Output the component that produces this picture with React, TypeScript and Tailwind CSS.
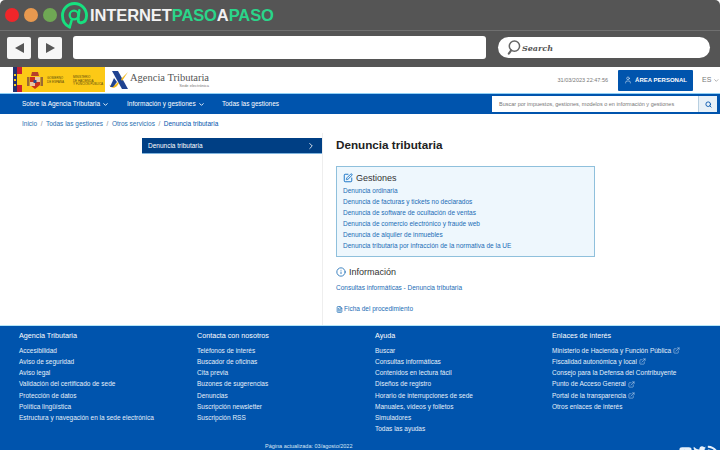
import { ChevronDown, ChevronRight, ExternalLink, FileText, Info, Search, SquarePen, User } from "lucide-react";
import { FaRss, FaTwitter, FaYoutube } from "react-icons/fa";

const gestiones = [
  "Denuncia ordinaria",
  "Denuncia de facturas y tickets no declarados",
  "Denuncia de software de ocultación de ventas",
  "Denuncia de comercio electrónico y fraude web",
  "Denuncia de alquiler de inmuebles",
  "Denuncia tributaria por infracción de la normativa de la UE",
];

const footerColumns = [
  {
    title: "Agencia Tributaria",
    width: "w-[178px]",
    links: [
      { label: "Accesibilidad" },
      { label: "Aviso de seguridad" },
      { label: "Aviso legal" },
      { label: "Validación del certificado de sede" },
      { label: "Protección de datos" },
      { label: "Política lingüística" },
      { label: "Estructura y navegación en la sede electrónica" },
    ],
  },
  {
    title: "Contacta con nosotros",
    width: "w-[178px]",
    links: [
      { label: "Teléfonos de interés" },
      { label: "Buscador de oficinas" },
      { label: "Cita previa" },
      { label: "Buzones de sugerencias" },
      { label: "Denuncias" },
      { label: "Suscripción newsletter" },
      { label: "Suscripción RSS" },
    ],
  },
  {
    title: "Ayuda",
    width: "w-[177px]",
    links: [
      { label: "Buscar" },
      { label: "Consultas informáticas" },
      { label: "Contenidos en lectura fácil" },
      { label: "Diseños de registro" },
      { label: "Horario de interrupciones de sede" },
      { label: "Manuales, vídeos y folletos" },
      { label: "Simuladores" },
      { label: "Todas las ayudas" },
    ],
  },
  {
    title: "Enlaces de interés",
    width: "w-[168px]",
    links: [
      { label: "Ministerio de Hacienda y Función Pública", external: true },
      { label: "Fiscalidad autonómica y local", external: true },
      { label: "Consejo para la Defensa del Contribuyente" },
      { label: "Punto de Acceso General", external: true },
      { label: "Portal de la transparencia", external: true },
      { label: "Otros enlaces de interés" },
    ],
  },
];

function BrowserChrome() {
  return (
    <div className="h-[67px] shrink-0 rounded-t-[5px] bg-[#555555] font-['Liberation_Sans',sans-serif]">
      <div className="flex h-[31px] items-center border-b border-[#6f6f6f] pl-[5px]">
        <span className="h-[14px] w-[14px] rounded-full bg-[#f0262a]" />
        <span className="ml-[5px] h-[14px] w-[14px] rounded-full bg-[#e8994f]" />
        <span className="ml-[5px] h-[14px] w-[14px] rounded-full bg-[#6fa854]" />
        <svg viewBox="0 0 28 28" className="ml-[4px] h-[27px] w-[27px]" fill="none" stroke="#17e07f" strokeLinecap="round">
          <path d="M9 26C3 23.500 1.500 18 1.500 14A12.500 12.500 0 0 1 26.500 14C26.500 18 24.500 21 21 21.500C18.500 21.800 17.500 20 18 18" strokeWidth="3" />
          <circle cx="13.500" cy="13.500" r="4.500" strokeWidth="2.400" />
          <path d="M19 8.500 17.800 18M11 19 9 26" strokeWidth="2.600" />
        </svg>
        <span className="ml-[2px] text-[16.5px] font-bold leading-none tracking-[-0.1px] text-[#f2f2f2]">
          INTERNET
          <span className="text-[#2ad58a]">PASO</span>A<span className="text-[#2ad58a]">PASO</span>
        </span>
      </div>
      <div className="flex items-center pl-[7px] pt-[5px]">
        <div className="flex h-[22px] w-[24px] items-center justify-center rounded-[2px] bg-[#f6f6f6]">
          <span className="h-0 w-0 border-y-[5px] border-r-[9px] border-y-transparent border-r-[#555555]" />
        </div>
        <div className="ml-[7px] flex h-[22px] w-[24px] items-center justify-center rounded-[2px] bg-[#f6f6f6]">
          <span className="h-0 w-0 border-y-[5px] border-l-[9px] border-y-transparent border-l-[#555555]" />
        </div>
        <div className="ml-[11px] h-[23px] w-[413px] rounded-[3px] bg-white" />
        <div className="ml-[12px] flex h-[21px] w-[212px] items-center rounded-full bg-white pl-[8px]">
          <svg viewBox="0 0 16 16" className="h-[15px] w-[15px]" fill="none" stroke="#666666" strokeWidth="1.600">
            <circle cx="9" cy="6.500" r="5.500" />
            <path d="M5.500 11 3 14.500" strokeWidth="2.200" strokeLinecap="round" />
          </svg>
          <span className="ml-[1px] font-['DejaVu_Serif',serif] text-[8px] font-bold italic text-[#555555]">Search</span>
        </div>
      </div>
    </div>
  );
}

function SiteHeader() {
  return (
    <div className="flex h-[26px] shrink-0 items-center bg-white pl-[13px]">
      <div className="flex h-[25px] w-[92px] self-start bg-[#fcc916]">
        <div className="flex w-[4px] flex-col items-center justify-center gap-[3px] bg-[#23306f]">
          <span className="h-[2px] w-[2px] bg-[#fcc916]" />
          <span className="h-[2px] w-[2px] bg-[#fcc916]" />
          <span className="h-[2px] w-[2px] bg-[#fcc916]" />
        </div>
        <div className="flex w-[5px] flex-col justify-between">
          <span className="h-[7px] bg-[#c8202f]" />
          <span className="h-[7px] bg-[#c8202f]" />
        </div>
        <svg viewBox="0 0 16 19" className="ml-[5px] mt-[4px] h-[19px] w-[16px]">
          <path d="M3 6h10v8l-5 4-5-4z" fill="#c8321f" />
          <path d="M5 1h6l1 4H4z" fill="#b5402a" />
          <path d="M0 6h2.500v9H0zM13.500 6H16v9h-2.500z" fill="#9a6a34" />
          <path d="M8 6h5v5H8zM3 11h5v4H3z" fill="#e9c6a6" />
          <path d="M6.500 9h3v3h-3z" fill="#2c4a90" />
        </svg>
        <div className="ml-[4px] mt-[9px] text-[3px] leading-[4px] text-[#5a4a10]">
          GOBIERNO
          <br />
          DE ESPAÑA
        </div>
        <div className="ml-[9px] mt-[9px] text-[3px] leading-[3.5px] text-[#5a4a10]">
          MINISTERIO
          <br />
          DE HACIENDA
          <br />
          Y FUNCIÓN PÚBLICA
        </div>
      </div>
      <svg viewBox="0 0 20 20" className="ml-[4px] h-[20px] w-[20px]">
        <path d="M0 14c1 2 4 2 7 0l2-2 1 1-2 3c-3 3-7 2-8-2z" fill="#f2b91e" />
        <path d="M3 1h6l10 18h-6z" fill="#1f4391" />
        <path d="M5 8 8 12 4 17H1z" fill="#1f4391" />
        <path d="M19 2 13 11l-1-2z" fill="#f2b91e" />
      </svg>
      <div className="ml-[1px] -mt-[1px] flex flex-col font-['Liberation_Serif',serif]">
        <span className="text-[10.5px] leading-[11px] text-[#555555]">Agencia Tributaria</span>
        <span className="self-end font-['Liberation_Sans',sans-serif] text-[4px] leading-[5px] text-[#777777]">Sede electrónica</span>
      </div>
      <span className="ml-auto text-[5.5px] text-[#777777]">31/03/2023 22:47:56</span>
      <div className="ml-[10px] flex h-[21px] w-[75px] items-center justify-center gap-[3px] rounded-[1px] bg-[#0054ad] text-[6px] font-bold text-white">
        <User size={8} strokeWidth={1.5} />
        ÁREA PERSONAL
      </div>
      <span className="ml-[9px] flex w-[18px] items-center gap-[2px] text-[7px] text-[#777777]">
        ES
        <ChevronDown size={7} />
      </span>
    </div>
  );
}

function SiteNav() {
  return (
    <div className="flex h-[21px] shrink-0 items-center border-t border-[#8fd0f5] bg-[#0054ad] pl-[22px] text-[6.5px] text-white">
      <span className="flex w-[105px] items-center gap-[2px]">
        Sobre la Agencia Tributaria
        <ChevronDown size={7} strokeWidth={3} />
      </span>
      <span className="flex w-[95px] items-center gap-[2px]">
        Información y gestiones
        <ChevronDown size={7} strokeWidth={3} />
      </span>
      <span>Todas las gestiones</span>
      <div className="ml-auto mr-[3px] flex h-[16px] w-[225px] bg-white">
        <span className="flex flex-1 items-center pl-[7px] text-[5.5px] text-[#777777]">
          Buscar por impuestos, gestiones, modelos o en información y gestiones
        </span>
        <span className="flex w-[19px] items-center justify-center border-l border-[#b8cfe0] bg-[#e8f1f8]">
          <Search size={7} strokeWidth={3} className="text-[#0054ad]" />
        </span>
      </div>
    </div>
  );
}

function Breadcrumb() {
  const items = ["Inicio", "Todas las gestiones", "Otros servicios", "Denuncia tributaria"];
  return (
    <div className="flex h-[19px] shrink-0 items-center gap-[3.5px] pl-[22px] text-[6.5px] text-[#2a6fb0]">
      {items.map((item, i) => (
        <span key={item} className="flex items-center gap-[3.5px]">
          {i > 0 && <span className="text-[#888888]">/</span>}
          <span className={i === 3 ? "text-[#0054ad]" : ""}>{item}</span>
        </span>
      ))}
    </div>
  );
}

function MainContent() {
  return (
    <div className="flex h-[192px] shrink-0 pl-[142px]">
      <div className="w-[181px] border-r border-[#eeeeee] pt-[5px]">
        <div className="flex h-[16px] w-[180px] items-center justify-between border-b border-[#7fb4de] bg-[#003f84] pl-[6px] pr-[6px] text-[6.5px] text-white">
          Denuncia tributaria
          <ChevronRight size={10} />
        </div>
      </div>
      <div className="box-content w-[259px] pl-[13px]">
        <h1 className="mt-[4px] text-[11.7px] font-bold leading-[16px] text-[#222222]">Denuncia tributaria</h1>
        <div className="mt-[13px] h-[91px] w-[259px] border border-[#8fc0dc] bg-[#eef7fd] pl-[6px] pt-[5px]">
          <div className="flex items-center gap-[3px] text-[9px] leading-[12px] text-[#333333]">
            <SquarePen size={10} strokeWidth={2.4} className="text-[#1f78c8]" />
            Gestiones
          </div>
          <div className="mt-[1px] flex flex-col">
            {gestiones.map((g) => (
              <span key={g} className="text-[6.5px] leading-[11.1px] text-[#1a6cb5]">
                {g}
              </span>
            ))}
          </div>
        </div>
        <div className="mt-[8px] flex items-center gap-[3px] text-[9px] leading-[14px] text-[#333333]">
          <Info size={10} strokeWidth={2} className="text-[#1a6cb5]" />
          Información
        </div>
        <div className="mt-[4px] text-[6.5px] leading-[10px] text-[#1a6cb5]">Consultas informáticas - Denuncia tributaria</div>
        <div className="mt-[11px] flex items-center gap-[1px] text-[6.5px] leading-[10px] text-[#1a6cb5]">
          <FileText size={7} strokeWidth={2.5} />
          Ficha del procedimiento
        </div>
      </div>
    </div>
  );
}

function SiteFooter() {
  return (
    <div className="relative flex-1 border-t border-[#b5e6f8] bg-[#0054ad] pl-[19px] pt-[5px] text-white">
      <div className="flex">
        {footerColumns.map((col) => (
          <div key={col.title} className={col.width}>
            <div className="text-[7.2px] leading-[10px]">{col.title}</div>
            <div className="mt-[4px] flex flex-col">
              {col.links.map((link) => (
                <span key={link.label} className="flex items-center gap-[2px] text-[6.5px] leading-[11.15px] text-[#e6f0fa]">
                  {link.label}
                  {link.external && <ExternalLink size={7} strokeWidth={1.5} />}
                </span>
              ))}
            </div>
          </div>
        ))}
      </div>
      <div className="absolute left-[265px] top-[116px] text-[5.5px] leading-[8px] text-[#d8e6f4]">Página actualizada: 03/agosto/2022</div>
      <div className="absolute right-0 top-[119px] flex gap-[1px] text-[13px] text-[#e6f0fa]">
        <FaYoutube />
        <FaTwitter />
        <FaRss />
      </div>
    </div>
  );
}

export default function App() {
  return (
    <div className="flex h-[450px] w-[720px] flex-col overflow-hidden bg-white font-['Liberation_Sans',sans-serif]">
      <BrowserChrome />
      <SiteHeader />
      <SiteNav />
      <Breadcrumb />
      <MainContent />
      <SiteFooter />
    </div>
  );
}
